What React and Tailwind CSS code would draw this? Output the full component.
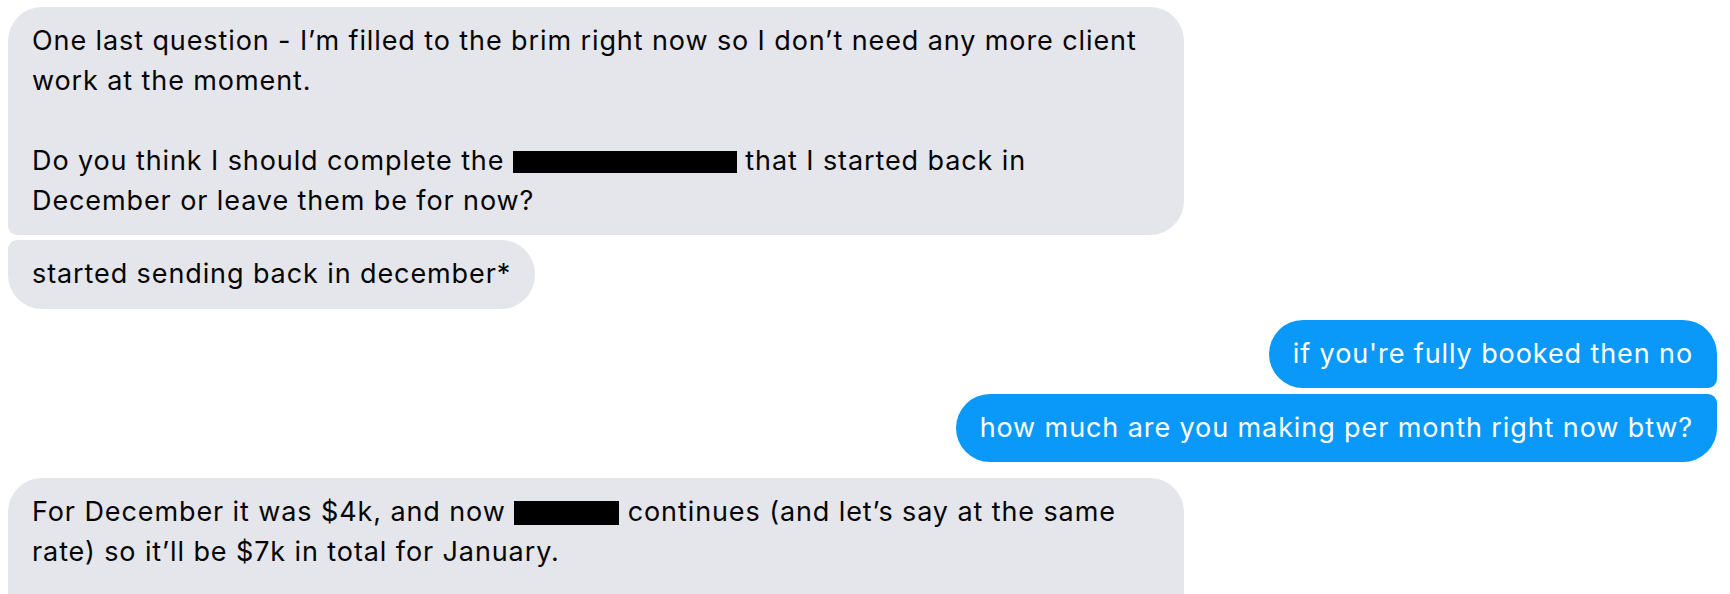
import React from "react";

function Redacted({ className }) {
  return <span className={`inline-block bg-black align-middle ${className}`} />;
}

function Incoming({ children, corners, className = "" }) {
  return (
    <div
      className={`self-start bg-[#e4e6eb] text-[#050505] px-[24px] pt-[14px] leading-[40px] ${corners} ${className}`}
    >
      {children}
    </div>
  );
}

function Outgoing({ children, corners, className = "" }) {
  return (
    <div
      className={`self-end bg-[#0a99f9] text-white px-[24px] py-[14px] leading-[40px] ${corners} ${className}`}
    >
      {children}
    </div>
  );
}

export default function App() {
  return (
    <div className="w-[1730px] h-[594px] overflow-hidden bg-white pl-[8px] pr-[13px] pt-[7px] flex flex-col font-['Inter',sans-serif] text-[27px] tracking-[0.9px]">
      <Incoming corners="rounded-[34px] rounded-bl-[9px]" className="w-[1176px] pb-[14px]">
        One last question - I’m filled to the brim right now so I don’t need any more client
        <br />
        work at the moment.
        <br />
        <br />
        Do you think I should complete the <Redacted className="w-[224px] h-[22px] -mt-[1px]" /> that I started back in
        <br />
        December or leave them be for now?
      </Incoming>
      <Incoming corners="rounded-[34px] rounded-tl-[9px]" className="mt-[5px] pb-[15px]">
        started sending back in december*
      </Incoming>
      <Outgoing corners="rounded-[34px] rounded-br-[9px]" className="mt-[11px]">
        if you're fully booked then no
      </Outgoing>
      <Outgoing corners="rounded-[34px] rounded-tr-[9px]" className="mt-[6px]">
        how much are you making per month right now btw?
      </Outgoing>
      <Incoming corners="rounded-[34px]" className="mt-[16px] w-[1176px] shrink-0 pb-[60px]">
        For December it was $4k, and now <Redacted className="w-[105px] h-[24px] -mt-[1px]" /> continues (and let’s say at the same
        <br />
        rate) so it’ll be $7k in total for January.
      </Incoming>
    </div>
  );
}
